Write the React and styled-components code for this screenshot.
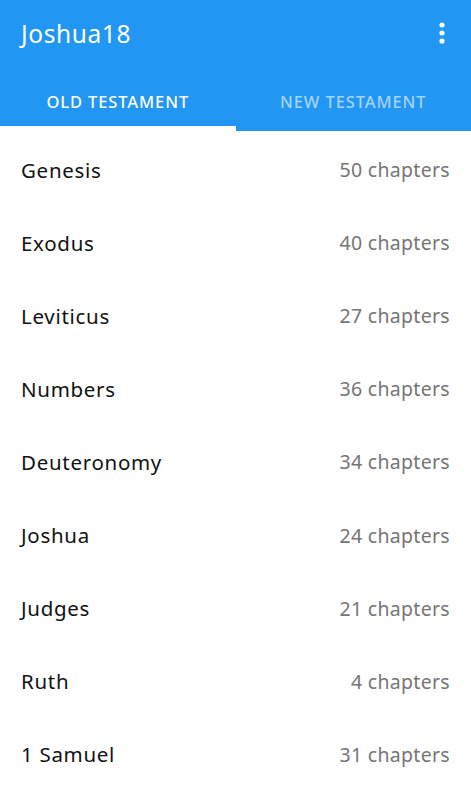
import styled, { createGlobalStyle } from "styled-components";

const books = [
  { name: "Genesis", chapters: 50 },
  { name: "Exodus", chapters: 40 },
  { name: "Leviticus", chapters: 27 },
  { name: "Numbers", chapters: 36 },
  { name: "Deuteronomy", chapters: 34 },
  { name: "Joshua", chapters: 24 },
  { name: "Judges", chapters: 21 },
  { name: "Ruth", chapters: 4 },
  { name: "1 Samuel", chapters: 31 },
];

const GlobalStyle = createGlobalStyle`
  body {
    margin: 0;
    background: #ffffff;
    font-family: "Noto Sans", "Open Sans", sans-serif;
  }
`;

const App = () => {
  return (
    <Screen>
      <GlobalStyle />
      <Header>
        <Toolbar>
          <Title>Joshua18</Title>
          <MenuButton aria-label="More options">
            <svg width="6" height="22" viewBox="0 0 6 22">
              <circle cx="3" cy="3" r="2.6" fill="#fff" />
              <circle cx="3" cy="11" r="2.6" fill="#fff" />
              <circle cx="3" cy="19" r="2.6" fill="#fff" />
            </svg>
          </MenuButton>
        </Toolbar>
        <Tabs>
          <Tab active>OLD TESTAMENT</Tab>
          <Tab>NEW TESTAMENT</Tab>
        </Tabs>
      </Header>
      <List>
        {books.map((b) => (
          <Row key={b.name}>
            <BookName>{b.name}</BookName>
            <Chapters>{b.chapters} chapters</Chapters>
          </Row>
        ))}
      </List>
    </Screen>
  );
};

const Screen = styled.div`
  width: 471px;
  height: 800px;
  overflow: hidden;
  background: #fff;
`;

const Header = styled.header`
  background: #2196f3;
  display: flex;
  flex-direction: column;
`;

const Toolbar = styled.div`
  height: 66px;
  display: flex;
  align-items: center;
  justify-content: space-between;
  padding: 0 21px;
`;

const Title = styled.h1`
  margin: 0;
  color: #fff;
  font-size: 24.5px;
  font-weight: 400;
  letter-spacing: 0.6px;
`;

const MenuButton = styled.div`
  display: flex;
  align-items: center;
  margin-right: 5px;
`;

const Tabs = styled.div`
  display: flex;
  height: 65px;
`;

const Tab = styled.div`
  flex: 1;
  display: flex;
  align-items: center;
  justify-content: center;
  padding-top: 10px;
  color: ${(p) => (p.active ? "#ffffff" : "rgba(255,255,255,0.6)")};
  font-size: 16.5px;
  font-weight: 500;
  letter-spacing: 0.9px;
  border-bottom: 5px solid ${(p) => (p.active ? "#ffffff" : "#2196f3")};
  box-sizing: border-box;
`;

const List = styled.div`
  display: flex;
  flex-direction: column;
  padding-top: 2px;
`;

const Row = styled.div`
  height: 73.1px;
  display: flex;
  align-items: center;
  justify-content: space-between;
  padding: 0 21px;
`;

const BookName = styled.span`
  font-size: 20.5px;
  color: #111;
  letter-spacing: 0.7px;
`;

const Chapters = styled.span`
  font-size: 19.5px;
  color: #757575;
  letter-spacing: 0.3px;
`;

export default App;
